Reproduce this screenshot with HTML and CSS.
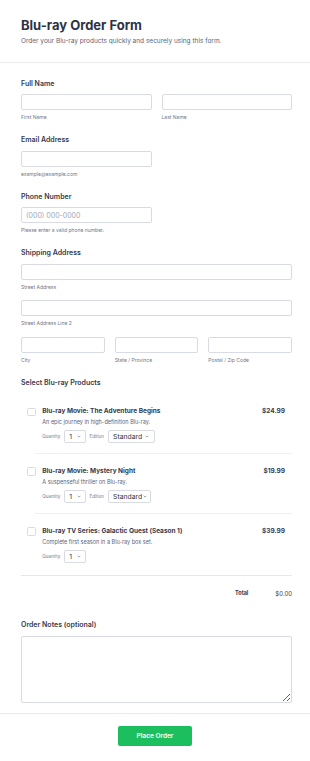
FILE: index.html
```html
<!DOCTYPE html>
<html lang="en">
<head>
    <meta charset="UTF-8">
    <meta name="viewport" content="width=device-width, initial-scale=1.0">
    <title>Blu-ray Order Form</title>
    <link rel="stylesheet" href="styles.css">
</head>
<body>
    <header class="form-header">
        <h1>Blu-ray Order Form</h1>
        <p>Order your Blu-ray products quickly and securely using this form.</p>
    </header>

    <form class="form-body">
        <div class="field">
            <label class="field-label">Full Name</label>
            <div class="cols cols-2">
                <div class="cell"><input type="text"><span class="hint">First Name</span></div>
                <div class="cell"><input type="text"><span class="hint">Last Name</span></div>
            </div>
        </div>

        <div class="field">
            <label class="field-label">Email Address</label>
            <div class="cols cols-2">
                <div class="cell"><input type="email"><span class="hint">example@example.com</span></div>
            </div>
        </div>

        <div class="field">
            <label class="field-label">Phone Number</label>
            <div class="cols cols-2">
                <div class="cell"><input type="tel" placeholder="(000) 000-0000"><span class="hint">Please enter a valid phone number.</span></div>
            </div>
        </div>

        <div class="field">
            <label class="field-label">Shipping Address</label>
            <div class="cell address-line"><input type="text"><span class="hint">Street Address</span></div>
            <div class="cell address-line"><input type="text"><span class="hint">Street Address Line 2</span></div>
            <div class="cols cols-3">
                <div class="cell"><input type="text"><span class="hint">City</span></div>
                <div class="cell"><input type="text"><span class="hint">State / Province</span></div>
                <div class="cell"><input type="text"><span class="hint">Postal / Zip Code</span></div>
            </div>
        </div>

        <div class="field products-field">
            <label class="field-label">Select Blu-ray Products</label>
            <div class="product-list">
                <div class="product">
                    <span class="checkbox"></span>
                    <div class="product-info">
                        <div class="product-head">
                            <span class="product-name">Blu-ray Movie: The Adventure Begins</span>
                            <span class="product-price">$24.99</span>
                        </div>
                        <p class="product-desc">An epic journey in high-definition Blu-ray.</p>
                        <div class="product-options">
                            <span class="opt-label">Quantity</span>
                            <span class="select select-qty"><span>1</span><svg viewBox="0 0 6 4"><path d="M1 1l2 2 2-2"/></svg></span>
                            <span class="opt-label">Edition</span>
                            <span class="select select-edition"><span>Standard</span><svg viewBox="0 0 6 4"><path d="M1 1l2 2 2-2"/></svg></span>
                        </div>
                    </div>
                </div>
                <div class="product-divider"></div>
                <div class="product">
                    <span class="checkbox"></span>
                    <div class="product-info">
                        <div class="product-head">
                            <span class="product-name">Blu-ray Movie: Mystery Night</span>
                            <span class="product-price">$19.99</span>
                        </div>
                        <p class="product-desc">A suspenseful thriller on Blu-ray.</p>
                        <div class="product-options">
                            <span class="opt-label">Quantity</span>
                            <span class="select select-qty"><span>1</span><svg viewBox="0 0 6 4"><path d="M1 1l2 2 2-2"/></svg></span>
                            <span class="opt-label">Edition</span>
                            <span class="select select-edition short"><span>Standard</span><svg viewBox="0 0 6 4"><path d="M1 1l2 2 2-2"/></svg></span>
                        </div>
                    </div>
                </div>
                <div class="product-divider"></div>
                <div class="product last">
                    <span class="checkbox"></span>
                    <div class="product-info">
                        <div class="product-head">
                            <span class="product-name">Blu-ray TV Series: Galactic Quest (Season 1)</span>
                            <span class="product-price">$39.99</span>
                        </div>
                        <p class="product-desc">Complete first season in a Blu-ray box set.</p>
                        <div class="product-options">
                            <span class="opt-label">Quantity</span>
                            <span class="select select-qty"><span>1</span><svg viewBox="0 0 6 4"><path d="M1 1l2 2 2-2"/></svg></span>
                        </div>
                    </div>
                </div>
            </div>
            <div class="total-row">
                <span class="total-label">Total</span>
                <span class="total-amount">$0.00</span>
            </div>
        </div>

        <div class="field notes-field">
            <label class="field-label">Order Notes (optional)</label>
            <textarea></textarea>
        </div>
    </form>

    <footer class="form-footer">
        <button type="button" class="submit-btn">Place Order</button>
    </footer>
</body>
</html>
```

FILE: styles.css
```css
/* Base */
* {
    box-sizing: border-box;
}

body {
    margin: 0;
    font-family: Inter, "Noto Sans", sans-serif;
    background: #fff;
    color: #2c3345;
}

/* Header */
.form-header {
    padding: 17px 18px 16px 21px;
    border-bottom: 1px solid #e9ebef;
}

.form-header h1 {
    margin: 0 0 3.5px;
    font-size: 13px;
    line-height: 16px;
    font-weight: 700;
    color: #2c3345;
}

.form-header p {
    margin: 0;
    font-size: 6.5px;
    line-height: 9px;
    color: #57647e;
}

/* Fields */
.form-body {
    padding: 16px 18px 0 21px;
}

.field {
    margin-bottom: 14px;
}

.field-label {
    display: block;
    margin-bottom: 5.5px;
    font-size: 7px;
    line-height: 10px;
    font-weight: 600;
    color: #343a4e;
}

.cols {
    display: grid;
    gap: 10px;
}

.cols-2 {
    grid-template-columns: 1fr 1fr;
}

.cols-3 {
    grid-template-columns: 1fr 1fr 1fr;
}

.cell input {
    display: block;
    width: 100%;
    height: 16px;
    padding: 0 4px;
    border: 1px solid #d8dbe2;
    border-radius: 2px;
    font-family: inherit;
    font-size: 7px;
    color: #2c3345;
    background: #fff;
}

.cell input::placeholder {
    color: #a0a8b8;
}

.hint {
    display: block;
    margin-top: 4px;
    font-size: 5px;
    line-height: 7px;
    color: #6f7888;
}

.address-line {
    margin-bottom: 9.5px;
}

/* Products */
.product-list {
    padding-top: 1.5px;
}

.product {
    display: flex;
    padding: 12.5px 7px 10px 6px;
}

.product.last {
    padding-bottom: 11.5px;
}

.checkbox {
    flex: none;
    width: 8.5px;
    height: 8.5px;
    margin-top: 0.5px;
    margin-right: 6.8px;
    border: 1px solid #d8dbe2;
    border-radius: 1.5px;
    background: #fff;
}

.product-info {
    flex: 1;
}

.product-head {
    display: flex;
    justify-content: space-between;
    font-size: 6.5px;
    line-height: 9px;
    font-weight: 700;
    color: #343a4e;
}

.product-desc {
    margin: 1.9px 0 0;
    font-size: 5.5px;
    line-height: 8px;
    color: #57647e;
}

.product-options {
    display: flex;
    align-items: center;
    gap: 3.8px;
    margin-top: 4.3px;
}

.opt-label {
    font-size: 4.5px;
    color: #6f7888;
}

.select {
    display: flex;
    align-items: center;
    justify-content: space-between;
    height: 13.3px;
    padding: 0 4px 0 4.3px;
    border: 1px solid #d8dbe2;
    border-radius: 2px;
    font-size: 6.8px;
    color: #2c3345;
}

.select svg {
    width: 4px;
    height: 3px;
    fill: none;
    stroke: #6f7888;
    stroke-width: 1;
}

.select-qty {
    width: 21.6px;
}

.select-edition {
    width: 47.6px;
    padding-right: 5px;
}

.select-edition.short {
    width: 43.5px;
    padding-right: 3.5px;
}

.product-divider {
    margin-left: 14px;
    border-top: 1px solid #eef0f3;
}

.total-row {
    display: flex;
    justify-content: flex-end;
    gap: 27px;
    padding-top: 13.5px;
    border-top: 1px solid #e6e8ec;
    font-size: 6px;
    line-height: 9px;
    color: #343a4e;
}

.total-label {
    font-weight: 700;
    font-size: 5.5px;
}

/* Notes */
.notes-field {
    margin-top: 22px;
    margin-bottom: 10px;
}

.notes-field textarea {
    display: block;
    width: 100%;
    height: 67px;
    border: 1px solid #d8dbe2;
    border-radius: 2px;
    font-family: inherit;
    font-size: 7px;
}

/* Footer */
.form-footer {
    display: flex;
    justify-content: center;
    padding: 12.5px 0 14px;
    border-top: 1px solid #e9ebef;
}

.submit-btn {
    width: 74.5px;
    height: 19.5px;
    border: none;
    border-radius: 2px;
    background: #1cbf5e;
    color: #fff;
    font-family: inherit;
    font-size: 6.5px;
    font-weight: 600;
    cursor: pointer;
}
```
